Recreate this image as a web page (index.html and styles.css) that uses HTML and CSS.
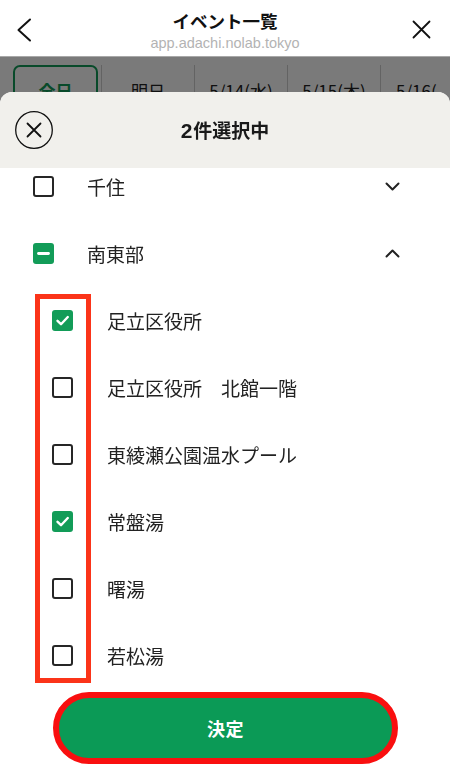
FILE: index.html
```html
<!DOCTYPE html>
<html lang="ja">
<head>
<meta charset="utf-8">
<title>イベント一覧</title>
<link rel="stylesheet" href="styles.css">
</head>
<body>
<header class="topbar">
  <div class="topbar-icon">
    <svg width="16" height="24" viewBox="0 0 16 24"><path d="M14 1.5 L2.5 12 L14 22.5" fill="none" stroke="#111" stroke-width="2" stroke-linecap="round" stroke-linejoin="round"/></svg>
  </div>
  <div class="topbar-title">
    <div class="title">イベント一覧</div>
    <div class="url">app.adachi.nolab.tokyo</div>
  </div>
  <div class="topbar-icon right">
    <svg width="19" height="19" viewBox="0 0 19 19"><path d="M1.5 1.5 L17.5 17.5 M17.5 1.5 L1.5 17.5" fill="none" stroke="#111" stroke-width="1.8" stroke-linecap="round"/></svg>
  </div>
</header>

<main class="page">
  <nav class="tabs">
    <div class="tab tab-active">全日</div>
    <div class="tab">明日</div>
    <div class="tab">5/14(水)</div>
    <div class="tab">5/15(木)</div>
    <div class="tab">5/16(金)</div>
  </nav>
</main>

<div class="backdrop"></div>

<section class="sheet">
  <div class="sheet-head">
    <button class="round-close">
      <svg width="38" height="38" viewBox="0 0 38 38"><circle cx="19" cy="19" r="18.3" fill="none" stroke="#111" stroke-width="1.3"/><path d="M12.5 12.5 L25.5 25.5 M25.5 12.5 L12.5 25.5" fill="none" stroke="#111" stroke-width="1.8" stroke-linecap="round"/></svg>
    </button>
    <div class="sheet-title"><span class="num">2</span>件選択中</div>
  </div>

  <div class="list-area">
    <div class="list">
      <div class="row parent">
        <span class="cb"></span>
        <span class="label">千住</span>
        <svg class="chev" width="15" height="9" viewBox="0 0 15 9"><path d="M1.5 1.5 L7.5 7.5 L13.5 1.5" fill="none" stroke="#222" stroke-width="2" stroke-linecap="round" stroke-linejoin="round"/></svg>
      </div>
      <div class="row parent">
        <span class="cb cb-on">
          <svg width="21" height="21" viewBox="0 0 21 21"><path d="M5.5 10.5 H15.5" stroke="#fff" stroke-width="2.8" stroke-linecap="round"/></svg>
        </span>
        <span class="label">南東部</span>
        <svg class="chev" width="15" height="9" viewBox="0 0 15 9"><path d="M1.5 7.5 L7.5 1.5 L13.5 7.5" fill="none" stroke="#222" stroke-width="2" stroke-linecap="round" stroke-linejoin="round"/></svg>
      </div>
      <div class="children">
        <div class="row child">
          <span class="cb cb-on">
            <svg width="21" height="21" viewBox="0 0 21 21"><path d="M5.5 10.8 L9 14.2 L15.8 7" fill="none" stroke="#fff" stroke-width="2.4" stroke-linecap="round" stroke-linejoin="round"/></svg>
          </span>
          <span class="label">足立区役所</span>
        </div>
        <div class="row child">
          <span class="cb"></span>
          <span class="label">足立区役所　北館一階</span>
        </div>
        <div class="row child">
          <span class="cb"></span>
          <span class="label">東綾瀬公園温水プール</span>
        </div>
        <div class="row child">
          <span class="cb cb-on">
            <svg width="21" height="21" viewBox="0 0 21 21"><path d="M5.5 10.8 L9 14.2 L15.8 7" fill="none" stroke="#fff" stroke-width="2.4" stroke-linecap="round" stroke-linejoin="round"/></svg>
          </span>
          <span class="label">常盤湯</span>
        </div>
        <div class="row child">
          <span class="cb"></span>
          <span class="label">曙湯</span>
        </div>
        <div class="row child">
          <span class="cb"></span>
          <span class="label">若松湯</span>
        </div>
        <div class="highlight"></div>
      </div>
    </div>
  </div>

  <div class="sheet-foot">
    <button class="submit">決定</button>
  </div>
</section>
</body>
</html>
```

FILE: styles.css
```css
* { box-sizing: border-box; }

html, body {
  margin: 0;
  padding: 0;
}

body {
  width: 450px;
  height: 779px;
  overflow: hidden;
  background: #fff;
  font-family: "Noto Sans CJK JP", "Noto Sans", "Liberation Sans", sans-serif;
  color: #222;
}

/* top bar */
.topbar {
  height: 57px;
  border-bottom: 1px solid #a8a8a8;
  display: grid;
  grid-template-columns: 60px 1fr 60px;
  align-items: center;
  background: #fff;
}

.topbar-icon {
  display: flex;
  align-items: center;
  padding-left: 16px;
  padding-top: 3px;
}

.topbar-icon.right {
  justify-content: flex-end;
  padding-left: 0;
  padding-right: 19px;
}

.topbar-icon svg { display: block; }

.topbar-title {
  align-self: start;
  padding-top: 9px;
  text-align: center;
}

.title {
  font-size: 17.5px;
  font-weight: 700;
  line-height: 23px;
  color: #111;
}

.url {
  font-family: "Liberation Sans", "Noto Sans", sans-serif;
  font-size: 14.5px;
  line-height: 18px;
  margin-top: 2px;
  color: #b3b3b3;
}

/* page behind */
.page {
  padding-top: 8px;
  overflow: hidden;
}

.tabs {
  display: flex;
  padding-left: 13px;
  white-space: nowrap;
  overflow: hidden;
  width: 450px;
}

.tab {
  flex: 0 0 93px;
  height: 50px;
  display: flex;
  align-items: center;
  justify-content: center;
  font-size: 17px;
  color: #222;
  border-left: 1px solid #cfcfcf;
  overflow: hidden;
}

.tab:last-child {
  flex: 0 0 57px;
  justify-content: flex-start;
  padding-left: 15px;
}

.tab-active {
  flex: 0 0 85px;
  border: 2px solid #119c58;
  border-radius: 7px;
  color: #119c58;
  font-weight: 700;
  margin-right: 3px;
}

.backdrop {
  position: fixed;
  top: 57px;
  left: 0;
  right: 0;
  bottom: 0;
  background: rgba(0, 0, 0, 0.52);
}

/* sheet */
.sheet {
  position: fixed;
  top: 92px;
  left: 0;
  right: 0;
  bottom: 0;
  background: #fff;
  border-radius: 12px 12px 0 0;
  overflow: hidden;
  display: flex;
  flex-direction: column;
}

.sheet-head {
  height: 76px;
  flex: 0 0 76px;
  background: #f1f0ec;
  display: flex;
  align-items: center;
  padding-left: 15px;
  position: relative;
  z-index: 1;
}

.round-close {
  width: 38px;
  height: 38px;
  padding: 0;
  margin: 0;
  border: 0;
  background: transparent;
  display: block;
}

.round-close svg { display: block; }

.sheet-title {
  flex: 1;
  text-align: center;
  margin-right: 53px;
  font-size: 19px;
  font-weight: 700;
  color: #1a1a1a;
  line-height: 26px;
}

.sheet-title .num {
  font-family: "Liberation Sans", "Noto Sans", sans-serif;
  font-size: 21px;
  margin-right: 1px;
}

.list-area {
  flex: 1 1 auto;
  overflow: hidden;
}

.list {
  margin-top: -15px;
}

.row {
  height: 67px;
  display: flex;
  align-items: center;
}

.row.parent {
  padding-left: 33px;
  padding-right: 50px;
}

.row.child {
  padding-left: 52px;
}

.cb {
  flex: 0 0 21px;
  width: 21px;
  height: 21px;
  border: 2.3px solid #262626;
  border-radius: 3px;
  display: flex;
  align-items: center;
  justify-content: center;
  overflow: hidden;
}

.cb-on {
  border: 0;
  background: #129c58;
}

.cb svg { display: block; }

.label {
  font-size: 19px;
  line-height: 26px;
  color: #222;
  flex: 1;
}

.row.parent .label { margin-left: 33px; }
.row.child .label { margin-left: 34px; }

.chev { display: block; flex: 0 0 15px; }

.children {
  position: relative;
}

.highlight {
  position: absolute;
  top: 7px;
  left: 35px;
  width: 56px;
  height: 389px;
  border: 5px solid #fb3419;
  pointer-events: none;
}

.sheet-foot {
  flex: 0 0 90px;
  padding: 3px 52px 15px 53px;
}

.submit {
  width: 345px;
  height: 72px;
  display: block;
  margin: 0;
  border: 6px solid #f90f0f;
  border-radius: 36px;
  background: #0b9a56;
  color: #fff;
  font-family: "Noto Sans CJK JP", "Noto Sans", sans-serif;
  font-size: 18px;
  font-weight: 700;
  letter-spacing: 0.5px;
}
```
